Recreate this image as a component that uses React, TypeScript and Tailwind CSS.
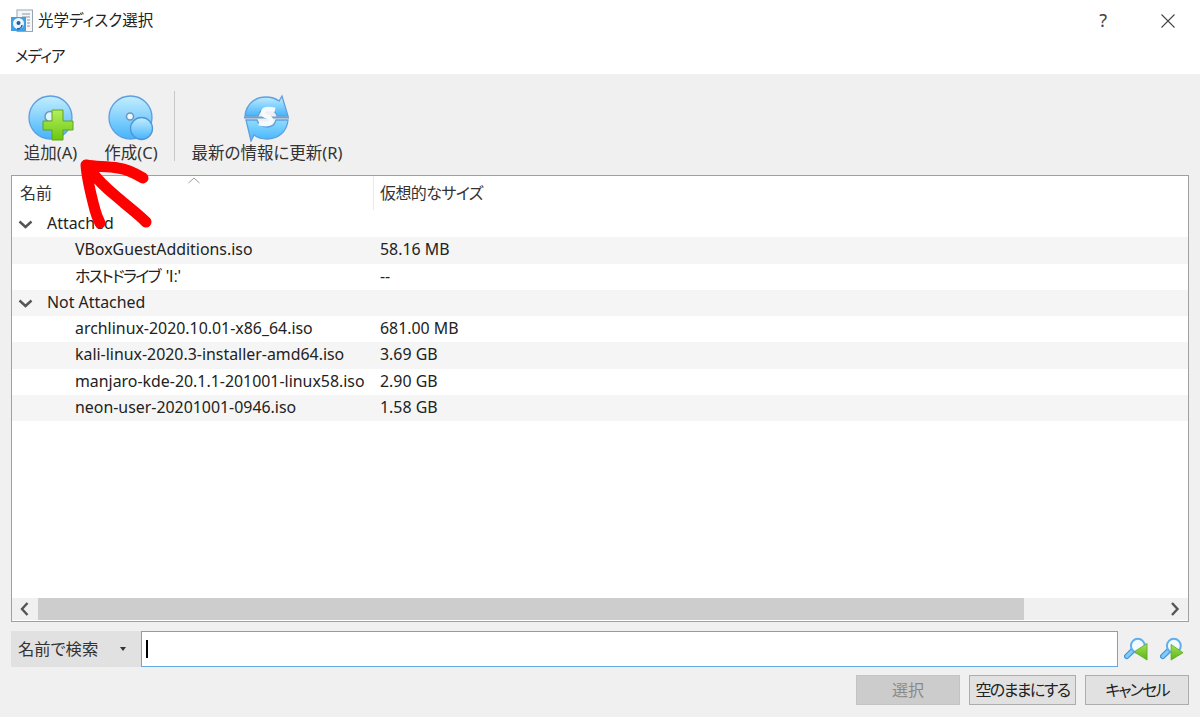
const FONT = "font-['Noto_Sans','Noto_Sans_CJK_JP',sans-serif] [font-feature-settings:'palt']";

type Row = { name: string; size: string; shaded?: boolean; group?: boolean; suffix?: string };

const ROWS: Row[] = [
  { name: "Attached", size: "", group: true },
  { name: "VBoxGuestAdditions.iso", size: "58.16 MB", shaded: true },
  { name: "ホストドライブ", suffix: "'I:'", size: "--" },
  { name: "Not Attached", size: "", group: true, shaded: true },
  { name: "archlinux-2020.10.01-x86_64.iso", size: "681.00 MB" },
  { name: "kali-linux-2020.3-installer-amd64.iso", size: "3.69 GB", shaded: true },
  { name: "manjaro-kde-20.1.1-201001-linux58.iso", size: "2.90 GB" },
  { name: "neon-user-20201001-0946.iso", size: "1.58 GB", shaded: true },
];

function DiscGradient({ id }: { id: string }) {
  return (
    <linearGradient id={id} x1="0" y1="0" x2="0" y2="1">
      <stop offset="0" stopColor="#c4eeff" />
      <stop offset="1" stopColor="#45b4fb" />
    </linearGradient>
  );
}

function AddIcon() {
  return (
    <svg width="46" height="46" viewBox="0 0 46 46">
      <defs>
        <DiscGradient id="addDisc" />
        <linearGradient id="addPlus" x1="0" y1="0" x2="0" y2="1">
          <stop offset="0" stopColor="#b4ee60" />
          <stop offset="1" stopColor="#6cc810" />
        </linearGradient>
      </defs>
      <circle cx="22.5" cy="22.5" r="21.5" fill="url(#addDisc)" stroke="#5d9fe0" strokeWidth="1.3" />
      <circle cx="22" cy="21.5" r="5" fill="#dff4ff" stroke="#6d95c0" strokeWidth="1.5" />
      <path d="M24 15h11v11h10v9H35v10H24V35H15v-9h9z" fill="url(#addPlus)" stroke="#62a41c" strokeWidth="1" />
    </svg>
  );
}

function CreateIcon() {
  return (
    <svg width="46" height="46" viewBox="0 0 46 46">
      <defs>
        <DiscGradient id="newDisc" />
        <DiscGradient id="newDisc2" />
      </defs>
      <circle cx="22.5" cy="22.5" r="21.5" fill="url(#newDisc)" stroke="#5d9fe0" strokeWidth="1.3" />
      <circle cx="22" cy="21.5" r="3.5" fill="#eef9ff" stroke="#6d95c0" strokeWidth="1.5" />
      <circle cx="33.5" cy="33.5" r="11" fill="url(#newDisc2)" stroke="#4f96d8" strokeWidth="1.3" />
    </svg>
  );
}

function RefreshIcon() {
  return (
    <svg width="46" height="48" viewBox="0 0 46 48">
      <defs>
        <DiscGradient id="refreshTop" />
        <linearGradient id="refreshBottom" x1="0" y1="0" x2="0" y2="1">
          <stop offset="0" stopColor="#8fdcff" />
          <stop offset="1" stopColor="#45b4fb" />
        </linearGradient>
      </defs>
      <path d="M1 22C2 10 11 3 22 3c5 0 9 1 13 4l3-5 6 20H33c-1-4-5-7-10-7-5 0-8 3-9 7z" fill="url(#refreshTop)" stroke="#5d9fe0" strokeWidth="1.3" />
      <path d="M44 26c-1 12-10 19-21 19-5 0-9-1-13-4l-3 6L2 26h11c1 4 5 7 10 7 5 0 8-3 9-7z" fill="url(#refreshBottom)" stroke="#5d9fe0" strokeWidth="1.3" />
      <path d="M0 23.5h45" stroke="#6f9fce" strokeWidth="2.2" />
      <path d="M31 16c-7-2-12-1-12 3 0 4 8 3 8 7 0 4-6 5-12 3" fill="none" stroke="#f4fbff" strokeWidth="4.5" />
    </svg>
  );
}

function WindowIcon() {
  return (
    <svg width="24" height="24" viewBox="0 0 24 24">
      <rect x="7" y="1" width="15.5" height="21.5" fill="#f4f6f8" stroke="#9aa5b1" strokeWidth="1" />
      <path d="M12 5h8M12 8h8M17 11h3M17 14h3M17 17h3" stroke="#8b96a3" strokeWidth="1.2" />
      <rect x="1" y="8" width="15" height="14" fill="#3f9fe6" />
      <circle cx="8.5" cy="14.5" r="5.5" fill="#e9f6ff" />
      <circle cx="8.5" cy="14" r="2" fill="#1c5f9e" />
      <path d="M7 20c3 0 5-2 5-4" fill="none" stroke="#1c5f9e" strokeWidth="1.6" />
    </svg>
  );
}

function SearchIcon({ flip }: { flip?: boolean }) {
  return (
    <svg width="24" height="24" viewBox="0 0 26 26">
      <defs>
        <linearGradient id={flip ? "findNext" : "findPrev"} x1="0" y1="0" x2="0" y2="1">
          <stop offset="0" stopColor="#a6e15a" />
          <stop offset="1" stopColor="#56b414" />
        </linearGradient>
      </defs>
      <path d="M3 21l7-7" stroke="#3f93dc" strokeWidth="6" strokeLinecap="round" />
      <path d="M3 21l7-7" stroke="#7fcdf8" strokeWidth="3.4" strokeLinecap="round" />
      <circle cx="15" cy="9.5" r="7.5" fill="#f2fbff" stroke="#62aeea" strokeWidth="2.2" />
      {flip ? (
        <path d="M12 8l13 9L12 25z" fill="url(#findNext)" stroke="#5ba51f" strokeWidth="0.8" />
      ) : (
        <path d="M25 7v18L11 16z" fill="url(#findPrev)" stroke="#5ba51f" strokeWidth="0.8" />
      )}
    </svg>
  );
}

function Chevron({ dir }: { dir: "down" | "left" | "right" }) {
  const d = dir === "down" ? "M1.5 2.5l6 5.5 6-5.5" : dir === "left" ? "M8.5 1l-5.5 6 5.5 6" : "M3 1l5.5 6L3 13";
  const w = dir === "down" ? 15 : 12;
  const h = dir === "down" ? 10 : 14;
  return (
    <svg width={w} height={h} viewBox={`0 0 ${w} ${h}`}>
      <path d={d} fill="none" stroke="#555" strokeWidth="2.4" />
    </svg>
  );
}

export default function App() {
  return (
    <div className={`relative flex h-[717px] w-[1200px] flex-col overflow-hidden bg-[#f0f0f0] text-[#222] ${FONT}`}>
      {/* title bar + menu */}
      <div className="flex h-[41px] items-center bg-white pl-[10px]">
        <WindowIcon />
        <span className="ml-[4px] text-[15.5px] text-[#222]">光学ディスク選択</span>
        <div className="ml-auto flex items-center">
          <span className="mr-[54px] text-[18px] text-[#444]">?</span>
          <svg width="14" height="14" viewBox="0 0 14 14" className="mr-[25px]">
            <path d="M0.5 0.5l13 13M13.5 0.5l-13 13" stroke="#444" strokeWidth="1.1" />
          </svg>
        </div>
      </div>
      <div className="flex h-[33px] items-start bg-white pl-[15px] text-[15.5px] leading-[33px] tracking-[-1px]">
        <span className="-mt-[1px]">メディア</span>
      </div>

      {/* toolbar */}
      <div className="flex h-[101px] items-start pl-[23px] pt-[20px]">
        <div className="flex w-[55px] flex-col items-center">
          <div className="flex h-[48px] items-center"><AddIcon /></div>
          <span className="whitespace-nowrap text-[16.5px] leading-[22px] text-[#333]">追加(A)</span>
        </div>
        <div className="ml-[26px] flex w-[54px] flex-col items-center">
          <div className="flex h-[48px] items-center"><CreateIcon /></div>
          <span className="whitespace-nowrap text-[16.5px] leading-[22px] text-[#333]">作成(C)</span>
        </div>
        <div className="-mt-[3px] ml-[16px] h-[70px] w-[1px] bg-[#c8c8c8]" />
        <div className="ml-[17px] flex w-[150px] flex-col items-center">
          <div className="flex h-[48px] items-center"><RefreshIcon /></div>
          <span className="whitespace-nowrap text-[16.5px] leading-[22px] text-[#333]">最新の情報に更新(R)</span>
        </div>
      </div>

      {/* medium tree */}
      <div className="mx-[11px] flex h-[447px] flex-col border border-[#a0a0a0] bg-white">
        <div className="flex h-[35px] shrink-0">
          <div className="w-[361px] pl-[8px] pt-[5px] text-[16px] leading-[24px] text-[#333]">名前</div>
          <div className="h-[34px] w-[1px] bg-[#e8e8ee]" />
          <div className="whitespace-nowrap pl-[6px] pt-[5px] text-[16px] leading-[24px] tracking-[-0.6px] text-[#333]">仮想的なサイズ</div>
        </div>
        {ROWS.map((row) => (
          <div key={row.name} className={`flex h-[26.25px] shrink-0 items-center text-[15.9px] ${row.shaded ? "bg-[#f5f5f5]" : "bg-white"}`}>
            {row.group ? (
              <div className="flex items-center pl-[6px]">
                <Chevron dir="down" />
                <span className="ml-[14px]">{row.name}</span>
              </div>
            ) : (
              <>
                <span className="w-[362px] whitespace-nowrap pl-[63px]">
                  {row.suffix ? <span className="tracking-[-1.6px]">{row.name}</span> : row.name}
                  {row.suffix ? <span className="ml-[6px] font-['Liberation_Sans',sans-serif]">{row.suffix}</span> : null}
                </span>
                <span className="pl-[6px]">{row.size}</span>
              </>
            )}
          </div>
        ))}
        <div className="flex-1" />
        <div className="mb-[1px] flex h-[22px] shrink-0 items-center bg-[#f0f0f0]">
          <div className="flex w-[26px] justify-center"><Chevron dir="left" /></div>
          <div className="h-full w-[986px] bg-[#cdcdcd]" />
          <div className="ml-auto flex w-[26px] justify-center"><Chevron dir="right" /></div>
        </div>
      </div>

      {/* search */}
      <div className="ml-[11px] mt-[9px] flex h-[36px] items-center">
        <div className="flex h-full w-[130px] items-center bg-[#e1e1e1] pl-[7px] text-[16.3px] text-[#333]">
          <span className="whitespace-nowrap">名前で検索</span>
          <span className="ml-[22px] h-0 w-0 border-x-[3.5px] border-t-[4px] border-x-transparent border-t-[#333]" />
        </div>
        <div className="flex h-full w-[977px] items-center border-[1.5px] border-[#62a9e4] bg-white pl-[4px]">
          <div className="h-[18px] w-[2px] bg-black" />
        </div>
        <div className="ml-[6px] flex items-center gap-[12px]">
          <SearchIcon />
          <SearchIcon flip />
        </div>
      </div>

      {/* dialog buttons */}
      <div className="mr-[11px] mt-[8px] flex justify-end gap-[9px] text-[16px]">
        <button className="h-[30px] w-[104px] whitespace-nowrap border border-[#c4c4c4] bg-[#cccccc] text-[#8a8a8a]">選択</button>
        <button className="h-[30px] w-[107px] whitespace-nowrap border border-[#adadad] bg-[#e1e1e1] tracking-[-1.6px] text-[#222]">空のままにする</button>
        <button className="h-[30px] w-[104px] whitespace-nowrap border border-[#adadad] bg-[#e1e1e1] tracking-[-1.8px] text-[#222]">キャンセル</button>
      </div>

      {/* header sort caret */}
      <svg width="12" height="7" viewBox="0 0 12 7" className="absolute left-[188px] top-[177px]">
        <path d="M0.5 6l5.5-5 5.5 5" fill="none" stroke="#9a9a9a" strokeWidth="1" />
      </svg>

      {/* hand-drawn arrow */}
      <svg width="200" height="120" viewBox="0 0 200 120" className="absolute left-0 top-[150px]">
        <path
          d="M86 15c10 2 20 1 32 3 8 1 15 4 25 10M86 15c1 15 5 30 9 45 1 4 3 9 5 13M92 22c10 14 22 22 32 31 6 5 14 11 22 19"
          fill="none"
          stroke="#ff0000"
          strokeWidth="11"
          strokeLinecap="round"
          strokeLinejoin="round"
        />
      </svg>
    </div>
  );
}
